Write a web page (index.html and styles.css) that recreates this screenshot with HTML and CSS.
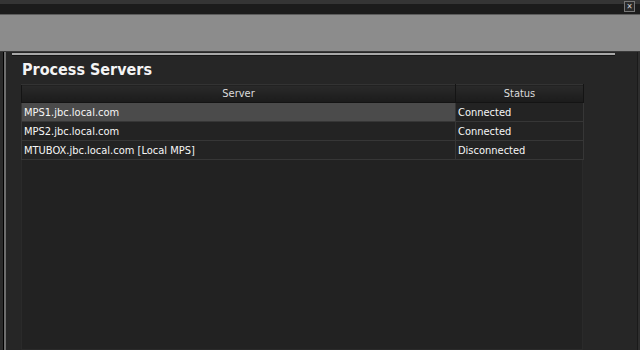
FILE: index.html
```html
<!DOCTYPE html>
<html>
<head>
<meta charset="utf-8">
<link rel="stylesheet" href="styles.css">
</head>
<body>
<div class="topbar">
  <div class="close">&#x2715;</div>
</div>
<div class="band"></div>
<div class="main">
  <div class="rail"></div>
  <div class="content">
    <div class="sep"></div>
    <div class="panel">
      <h1 class="title">Process Servers</h1>
      <div class="list">
        <table class="grid">
          <thead>
            <tr><th class="col-server">Server</th><th class="col-status">Status</th></tr>
          </thead>
          <tbody>
            <tr class="selected"><td class="server">MPS1.jbc.local.com</td><td>Connected</td></tr>
            <tr><td class="server">MPS2.jbc.local.com</td><td>Connected</td></tr>
            <tr><td class="server">MTUBOX.jbc.local.com [Local MPS]</td><td>Disconnected</td></tr>
          </tbody>
        </table>
        <div class="empty"></div>
      </div>
    </div>
  </div>
  <div class="edge"></div>
</div>
</body>
</html>
```

FILE: styles.css
```css
html, body {
  margin: 0;
  padding: 0;
  height: 100%;
}
body {
  background: #262626;
  font-family: "DejaVu Sans Condensed", "DejaVu Sans", sans-serif;
  color: #f0f0f0;
  overflow: hidden;
  display: flex;
  flex-direction: column;
}
.topbar {
  height: 14px;
  background: linear-gradient(#353535 0, #353535 4px, #1c1c1c 4px, #1c1c1c 100%);
  display: flex;
  justify-content: flex-end;
  align-items: flex-start;
  padding-right: 5px;
  box-sizing: border-box;
}
.close {
  margin-top: 1px;
  width: 9px;
  height: 9px;
  border: 1px solid #777;
  background: #2a2a2a;
  color: #cfcfcf;
  font-size: 8px;
  line-height: 9px;
  text-align: center;
  font-weight: bold;
}
.band {
  height: 36px;
  background: #8c8c8c;
  border-top: 1px solid #5c5c5c;
  border-bottom: 1px solid #3a3a3a;
}
.main {
  flex: 1;
  display: flex;
  min-height: 0;
}
.rail {
  width: 1px;
  border-left: 3px solid #2b2b2b;
  border-right: 2px solid #6e6e6e;
  background: #000;
}
.content {
  flex: 1;
  padding: 1px 22px 0 6px;
  display: flex;
  flex-direction: column;
}
.sep {
  height: 2px;
  background: #a8a8a8;
  border-bottom: 1px solid #151515;
}
.panel {
  flex: 1;
  padding: 0 0 0 9px;
  display: flex;
  flex-direction: column;
}
.title {
  margin: 3px 0 0 1px;
  font-family: "DejaVu Sans Condensed", "DejaVu Sans", sans-serif;
  font-weight: bold;
  font-size: 16px;
  line-height: 22px;
  height: 25px;
  color: #f4f4f4;
}
.list {
  width: 562px;
  flex: 1;
  display: flex;
  flex-direction: column;
  background: #222;
  box-shadow: inset 0 0 0 1px #2a2a2a;
}
.grid {
  width: 561px;
  border-collapse: collapse;
  table-layout: fixed;
  font-size: 11px;
}
.col-server { width: 433px; }
.col-status { width: 127px; }
.grid th {
  height: 17px;
  padding: 0;
  font-weight: normal;
  color: #dcdcdc;
  text-align: center;
  background: linear-gradient(#2a2a2a, #1b1b1b);
  border: 1px solid #141414;
  border-top-color: #333;
}
.grid td {
  height: 18px;
  padding: 0 0 0 2px;
  color: #f6f6f6;
  background: #232323;
  border: 1px solid #363636;
  white-space: nowrap;
}
.grid tr.selected td.server {
  background: #4b4b4b;
}
.empty {
  flex: 1;
}
.edge {
  width: 2px;
  background: #2e2e2e;
  border-left: 1px solid #1a1a1a;
}
```
